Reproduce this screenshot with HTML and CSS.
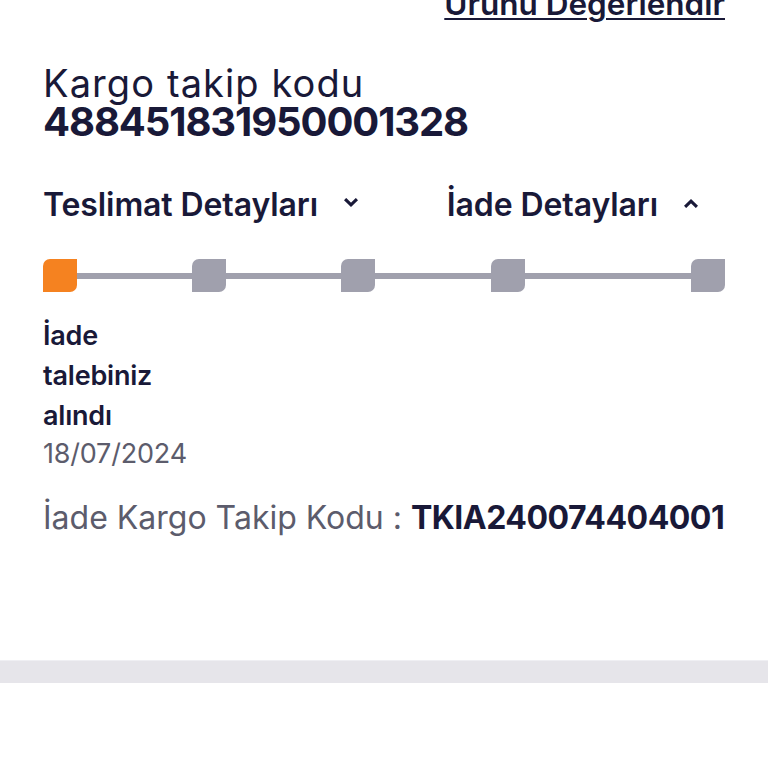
FILE: index.html
```html
<!DOCTYPE html>
<html lang="tr">
<head>
<meta charset="utf-8">
<link rel="stylesheet" href="styles.css">
</head>
<body>
<div class="card">
  <div class="rate-row"><a class="rate-link" href="#">Ürünü Değerlendir</a></div>
  <div class="tracking">
    <div class="tracking-label">Kargo takip kodu</div>
    <div class="tracking-code">488451831950001328</div>
  </div>
  <div class="tabs">
    <div class="tab">Teslimat Detayları
      <svg class="chev" width="14" height="10" viewBox="0 0 14 10"><path d="M2.2 2.2 L7 6.8 L11.8 2.2" fill="none" stroke="#191938" stroke-width="3.2" stroke-linecap="square"/></svg>
    </div>
    <div class="tab">İade Detayları
      <svg class="chev" width="14" height="10" viewBox="0 0 14 10"><path d="M2.2 7.8 L7 3.2 L11.8 7.8" fill="none" stroke="#191938" stroke-width="3.2" stroke-linecap="square"/></svg>
    </div>
  </div>
  <div class="stepper">
    <div class="step active"></div>
    <div class="line"></div>
    <div class="step"></div>
    <div class="line"></div>
    <div class="step"></div>
    <div class="line"></div>
    <div class="step"></div>
    <div class="line"></div>
    <div class="step"></div>
  </div>
  <div class="step-info">
    <div class="step-title">İade talebiniz alındı</div>
    <div class="step-date">18/07/2024</div>
  </div>
  <div class="return-code"><span class="rc-label">İade Kargo Takip Kodu : </span><span class="rc-value">TKIA240074404001</span></div>
</div>
<div class="separator"></div>
</body>
</html>
```
FILE: styles.css
```css
html, body {
  margin: 0;
  padding: 0;
  background: #ffffff;
}
body {
  font-family: "Inter", "Noto Sans", sans-serif;
  color: #191938;
  width: 768px;
  overflow: hidden;
}
.card {
  display: flow-root;
  padding: 0 43px;
  height: 661px;
  border-bottom: 1px solid #efeff3;
  box-sizing: border-box;
}
.rate-row {
  display: flex;
  justify-content: flex-end;
  margin-top: -14px;
  height: 36px;
}
.rate-link {
  font-size: 31.5px;
  font-weight: 600;
  color: #191938;
  text-decoration: underline;
  text-decoration-thickness: 2px;
  text-underline-offset: 3px;
  line-height: 36px;
}
.tracking {
  margin-top: 41px;
}
.tracking-label {
  font-size: 38px;
  font-weight: 400;
  line-height: 40px;
  letter-spacing: 1.1px;
}
.tracking-code {
  font-size: 40px;
  font-weight: 700;
  line-height: 38px;
  letter-spacing: -1.1px;
}
.tabs {
  display: flex;
  justify-content: space-between;
  margin-top: 46px;
  padding-right: 27px;
}
.tab {
  display: flex;
  align-items: center;
  gap: 26px;
  font-size: 32px;
  font-weight: 600;
  line-height: 36px;
  letter-spacing: -0.1px;
}
.chev {
  display: block;
  margin-bottom: 4px;
}
.stepper {
  display: grid;
  grid-template-columns: 34px 115px 34px 115px 34px 116px 34px 166px 34px;
  align-items: center;
  margin-top: 36px;
}
.step {
  height: 33px;
  background: #a0a0ad;
  border-radius: 7px 0 7px 0;
}
.step.active {
  background: #f58220;
}
.line {
  height: 6px;
  background: #a0a0ad;
}
.step-info {
  margin-top: 24px;
  width: 150px;
}
.step-title {
  font-size: 27px;
  font-weight: 600;
  line-height: 40px;
  letter-spacing: -0.2px;
}
.step-date {
  font-size: 27px;
  font-weight: 400;
  color: #5c5c6c;
  line-height: 36px;
  letter-spacing: -0.2px;
}
.return-code {
  margin-top: 28px;
  font-size: 32px;
  line-height: 36px;
  white-space: nowrap;
}
.rc-label {
  color: #5c5c6c;
  font-weight: 400;
}
.rc-value {
  font-weight: 700;
  letter-spacing: -0.5px;
}
.separator {
  height: 22px;
  background: #e6e5ea;
}
```
